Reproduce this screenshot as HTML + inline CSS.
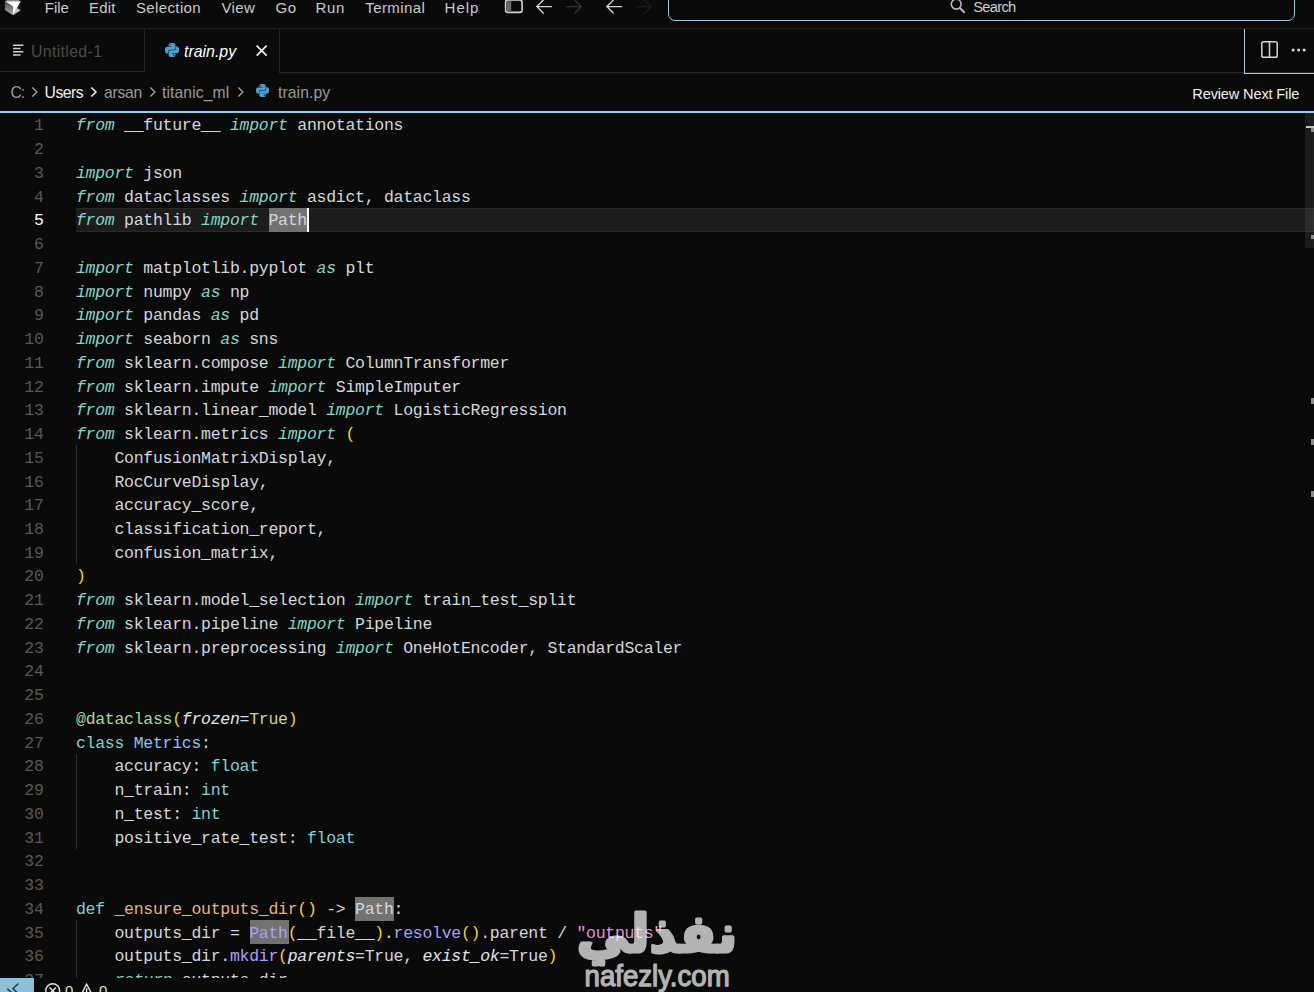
<!DOCTYPE html>
<html lang="en">
<head>
<meta charset="utf-8">
<title>train.py</title>
<style>
html,body{margin:0;padding:0;}
body{width:1314px;height:992px;overflow:hidden;background:#0a0a0a;position:relative;font-family:"Liberation Sans",sans-serif;color:#d6d6dd;}
#app{position:absolute;left:0;top:0;width:1314px;height:992px;overflow:hidden;background:#0a0a0a;}
svg{position:absolute;overflow:visible;}
/* title bar */
#title{position:absolute;left:0;top:0;width:1314px;height:28px;border-bottom:1px solid #212121;}
.mi{position:absolute;top:-3px;font-size:15px;line-height:22px;color:#cacaca;white-space:nowrap;}
#search{position:absolute;left:668px;top:-12px;width:624.6px;height:30.8px;border:1.2px solid #a4c9de;border-radius:7px;}
#search span{position:absolute;left:304.2px;top:7px;font-size:14.7px;line-height:22px;color:#cfcfcf;letter-spacing:-0.69px;}
/* tabs */
#tabs{position:absolute;left:0;top:29px;width:1314px;height:43px;}
.tab{position:absolute;top:0;height:42px;}
.tabtxt{position:absolute;top:12px;font-size:15.9px;line-height:22px;white-space:nowrap;}
/* breadcrumbs */
#crumbs{position:absolute;left:0;top:73px;width:1314px;height:38px;}
.bc{position:absolute;top:9px;font-size:15.7px;line-height:22px;color:#9a9a9a;white-space:nowrap;}
#blueline{position:absolute;left:0;top:111px;width:1314px;height:2px;background:#9fcbe6;box-shadow:0 0 0 1px #06101c;}
/* editor */
#editor{position:absolute;left:0;top:113px;width:1314px;height:864.5px;overflow:hidden;}
#ed{position:absolute;left:0;top:-113px;width:1314px;height:992px;}
.ln,.cl{position:absolute;font-family:"Liberation Mono",monospace;font-size:16.5px;line-height:23.74px;height:23.74px;white-space:pre;letter-spacing:-0.28px;}
.ln{left:0;width:43.6px;text-align:right;color:#585858;}
.ln.cur{color:#ffffff;}
.cl{left:76px;color:#d6d6dd;}
.k{color:#83d6c5;font-style:italic;}
.d{color:#d6d6dd;}
.t{color:#82d2ce;}
.c{color:#87c3ff;}
.f{color:#efb080;}
.m{color:#aaa0fa;}
.s{color:#e394dc;}
.y{color:#fbd02c;}
.g{color:#a8cc7c;}
.p{color:#e4e4ea;font-style:italic;}
.b{color:#cbd4a3;}
.dc{color:#b3d499;}
.hl{position:absolute;background:#727272;height:24px;}
#curline{position:absolute;left:76px;top:208px;width:1238px;height:22px;background:#1d1d1e;border-top:1px solid #2a2a2b;border-bottom:1px solid #2a2a2b;}
#caret{position:absolute;left:307px;top:208px;width:2px;height:24px;background:#ffffff;}
.guide{position:absolute;left:76px;width:1px;background:#303030;}
#sb{position:absolute;left:1305px;top:113px;width:9px;height:135px;background:rgba(255,255,255,0.075);}
.mk{position:absolute;left:1311px;width:3px;height:6px;background:#8c8c8c;}
/* status */
#status{position:absolute;left:0;top:977.5px;width:1314px;height:15px;background:#0a0a0a;}
#remote{position:absolute;left:0;top:977.5px;width:34px;height:15px;background:#8cc0d6;}
.st{position:absolute;top:982px;font-size:15px;line-height:18px;color:#e0e0e0;}
</style>
</head>
<body>
<div id="app">
 <div id="title">
  <svg style="left:0;top:0" width="26" height="18" viewBox="0 0 26 18"><defs><linearGradient id="lg" x1="0" y1="0" x2="0" y2="1"><stop offset="0" stop-color="#474747"/><stop offset="1" stop-color="#b4b4b4"/></linearGradient></defs><polygon points="4.9,1.3 12.9,-3.3 20.7,1.3" fill="#8a8a8a"/><polygon points="4.9,1.3 12.9,6.2 13.1,15.2 4.9,10" fill="url(#lg)"/><polygon points="20.7,1.3 20.7,10.2 17,8.1" fill="#1c1c1c"/><polygon points="17,8.1 20.7,10.2 13.1,15.2" fill="#c6c6c6"/><polygon points="4.9,1.3 20.7,1.3 13.1,15.2 12.9,6.2" fill="#ffffff"/></svg>
  <div class="mi" style="left:44.8px;letter-spacing:-0.08px">File</div>
  <div class="mi" style="left:89px;letter-spacing:0.2px">Edit</div>
  <div class="mi" style="left:136px;letter-spacing:0.37px">Selection</div>
  <div class="mi" style="left:221.4px;letter-spacing:0.4px">View</div>
  <div class="mi" style="left:275.6px;letter-spacing:0.43px">Go</div>
  <div class="mi" style="left:315.6px;letter-spacing:0.66px">Run</div>
  <div class="mi" style="left:365.2px;letter-spacing:0.44px">Terminal</div>
  <div class="mi" style="left:444.6px;letter-spacing:1.0px">Help</div>
  <svg style="left:504px;top:-2px" width="20" height="17" viewBox="0 0 20 17"><rect x="1.6" y="1.9" width="16.5" height="12.5" rx="2.4" fill="none" stroke="#d4d4d4" stroke-width="1.6"/><rect x="2.9" y="3.2" width="4.3" height="9.9" fill="#6a6a6a"/></svg>
  <svg style="left:536px;top:0" width="16" height="14" viewBox="0 0 16 14"><path d="M15.9 6.6H1M7.7 -0.2L0.9 6.6l6.8 6.8" fill="none" stroke="#d2d2d2" stroke-width="1.4"/></svg>
  <svg style="left:566px;top:0" width="16" height="14" viewBox="0 0 16 14"><path d="M0.1 6.6h14.9M8.3 -0.2L15.1 6.6l-6.8 6.8" fill="none" stroke="#333333" stroke-width="1.4"/></svg>
  <svg style="left:606px;top:0" width="16" height="14" viewBox="0 0 16 14"><path d="M15.9 6.6H1M7.7 -0.2L0.9 6.6l6.8 6.8" fill="none" stroke="#d2d2d2" stroke-width="1.4"/></svg>
  <svg style="left:636px;top:0" width="16" height="14" viewBox="0 0 16 14"><path d="M0.1 6.6h14.9M8.3 -0.2L15.1 6.6l-6.8 6.8" fill="none" stroke="#1d1d1d" stroke-width="1.4"/></svg>
  <div id="search">
   <svg style="left:281px;top:9.4px" width="16" height="16" viewBox="0 0 16 16"><circle cx="6.2" cy="6.2" r="4.9" fill="none" stroke="#bcbcbc" stroke-width="1.6"/><path d="M9.8 9.9l4.3 4.3" stroke="#bcbcbc" stroke-width="2" stroke-linecap="round"/></svg>
   <span>Search</span>
  </div>
 </div>
 <div id="tabs">
  <div style="position:absolute;left:0;top:42.4px;width:145px;height:1px;background:#272727"></div>
  <div style="position:absolute;left:279px;top:42.5px;width:1035px;height:1.2px;background:#2a2a2a"></div>
  <div class="tab" style="left:0;width:144px;border-right:1px solid #252525;">
   <svg style="left:12.5px;top:15px" width="11" height="13" viewBox="0 0 11 13"><path d="M0 1.2h10.3M0 4.5h7.6M0 7.8h10.3M0 11.1h7.6" stroke="#cdcdcd" stroke-width="1.5"/></svg>
   <div class="tabtxt" style="left:31px;color:#4b4b4b;letter-spacing:0.33px">Untitled-1</div>
  </div>
  <div class="tab" style="left:145px;width:134px;height:43px;border-right:1px solid #252525;">
   <svg style="left:19.7px;top:13.7px" width="14" height="14" viewBox="0 0 24 24"><path fill="#4d9fd0" d="M14.25.18l.9.2.73.26.59.3.45.32.34.34.25.34.16.33.1.3.04.26.02.2-.01.13V8.5l-.05.63-.13.55-.21.46-.26.38-.3.31-.33.25-.35.19-.35.14-.33.1-.3.07-.26.04-.21.02H8.77l-.69.05-.59.14-.5.22-.41.27-.33.32-.27.35-.2.36-.15.37-.1.35-.07.32-.04.27-.02.21v3.06H3.17l-.21-.03-.28-.07-.32-.12-.35-.18-.36-.26-.36-.36-.35-.46-.32-.59-.28-.73-.21-.88-.14-1.05-.05-1.23.06-1.22.16-1.04.24-.87.32-.71.36-.57.4-.44.42-.33.42-.24.4-.16.36-.1.32-.05.24-.01h.16l.06.01h8.16v-.83H6.18l-.01-2.75-.02-.37.05-.34.11-.31.17-.28.25-.26.31-.23.38-.2.44-.18.51-.15.58-.12.64-.1.71-.06.77-.04.84-.02 1.27.05zm-6.3 1.98l-.23.33-.08.41.08.41.23.34.33.22.41.09.41-.09.33-.22.23-.34.08-.41-.08-.41-.23-.33-.33-.22-.41-.09-.41.09zm13.09 3.95l.28.06.32.12.35.18.36.27.36.35.35.47.32.59.28.73.21.88.14 1.04.05 1.23-.06 1.23-.16 1.04-.24.86-.32.71-.36.57-.4.45-.42.33-.42.24-.4.16-.36.09-.32.05-.24.02-.16-.01h-8.22v.82h5.84l.01 2.76.02.36-.05.34-.11.31-.17.29-.25.25-.31.24-.38.2-.44.17-.51.15-.58.13-.64.09-.71.07-.77.04-.84.01-1.27-.04-1.07-.14-.9-.2-.73-.25-.59-.3-.45-.33-.34-.34-.25-.34-.16-.33-.1-.3-.04-.25-.02-.2.01-.13v-5.34l.05-.64.13-.54.21-.46.26-.38.3-.32.33-.24.35-.2.35-.14.33-.1.3-.06.26-.04.21-.02.13-.01h5.84l.69-.05.59-.14.5-.21.41-.28.33-.32.27-.35.2-.36.15-.36.1-.35.07-.32.04-.28.02-.21V6.07h2.09l.14.01zm-6.47 14.25l-.23.33-.08.41.08.41.23.33.33.23.41.08.41-.08.33-.23.23-.33.08-.41-.08-.41-.23-.33-.33-.23-.41-.08-.41.08z"/></svg>
   <div class="tabtxt" style="left:39px;color:#ffffff;font-style:italic">train.py</div>
   <svg style="left:110.6px;top:16.2px" width="11.3" height="11.3" viewBox="0 0 12 12"><path d="M0.7 0.7l10.6 10.6M11.3 0.7L0.7 11.3" stroke="#f6f6f6" stroke-width="1.7"/></svg>
  </div>
  <div style="position:absolute;left:1244px;top:0;width:70px;height:44.8px;border-left:1.2px solid #a2cce2;border-bottom:1.3px solid #a2cce2;box-sizing:border-box"></div>
  <svg style="left:1260.5px;top:12px" width="17" height="17" viewBox="0 0 17 17"><rect x="0.8" y="0.8" width="15.4" height="15.4" rx="1.8" fill="none" stroke="#d4d4d4" stroke-width="1.5"/><path d="M8.5 1v15" stroke="#d4d4d4" stroke-width="1.5"/></svg>
  <svg style="left:1291px;top:19px" width="15" height="4" viewBox="0 0 15 4"><circle cx="2.1" cy="2.1" r="1.5" fill="#dcdcdc"/><circle cx="7.6" cy="2.1" r="1.5" fill="#dcdcdc"/><circle cx="13.1" cy="2.1" r="1.5" fill="#dcdcdc"/></svg>
 </div>
 <div id="crumbs">
  <div class="bc" style="left:10.5px;letter-spacing:-1.2px">C:</div>
  <svg style="left:31px;top:13px" width="8" height="12" viewBox="0 0 8 12"><path d="M1.3 1.5l4.6 4.5-4.6 4.5" fill="none" stroke="#9a9a9a" stroke-width="1.5"/></svg>
  <div class="bc" style="left:44.6px;color:#efefef;letter-spacing:-0.5px">Users</div>
  <svg style="left:89.9px;top:13px" width="8" height="12" viewBox="0 0 8 12"><path d="M1.3 1.5l4.6 4.5-4.6 4.5" fill="none" stroke="#e8e8e8" stroke-width="1.7"/></svg>
  <div class="bc" style="left:104px;letter-spacing:-0.24px">arsan</div>
  <svg style="left:148.8px;top:13px" width="8" height="12" viewBox="0 0 8 12"><path d="M1.3 1.5l4.6 4.5-4.6 4.5" fill="none" stroke="#9a9a9a" stroke-width="1.5"/></svg>
  <div class="bc" style="left:162px;letter-spacing:0.1px">titanic_ml</div>
  <svg style="left:237.4px;top:13px" width="8" height="12" viewBox="0 0 8 12"><path d="M1.3 1.5l4.6 4.5-4.6 4.5" fill="none" stroke="#9a9a9a" stroke-width="1.5"/></svg>
  <svg style="left:256px;top:11.2px" width="13" height="13" viewBox="0 0 24 24"><path fill="#4d9fd0" d="M14.25.18l.9.2.73.26.59.3.45.32.34.34.25.34.16.33.1.3.04.26.02.2-.01.13V8.5l-.05.63-.13.55-.21.46-.26.38-.3.31-.33.25-.35.19-.35.14-.33.1-.3.07-.26.04-.21.02H8.77l-.69.05-.59.14-.5.22-.41.27-.33.32-.27.35-.2.36-.15.37-.1.35-.07.32-.04.27-.02.21v3.06H3.17l-.21-.03-.28-.07-.32-.12-.35-.18-.36-.26-.36-.36-.35-.46-.32-.59-.28-.73-.21-.88-.14-1.05-.05-1.23.06-1.22.16-1.04.24-.87.32-.71.36-.57.4-.44.42-.33.42-.24.4-.16.36-.1.32-.05.24-.01h.16l.06.01h8.16v-.83H6.18l-.01-2.75-.02-.37.05-.34.11-.31.17-.28.25-.26.31-.23.38-.2.44-.18.51-.15.58-.12.64-.1.71-.06.77-.04.84-.02 1.27.05zm-6.3 1.98l-.23.33-.08.41.08.41.23.34.33.22.41.09.41-.09.33-.22.23-.34.08-.41-.08-.41-.23-.33-.33-.22-.41-.09-.41.09zm13.09 3.95l.28.06.32.12.35.18.36.27.36.35.35.47.32.59.28.73.21.88.14 1.04.05 1.23-.06 1.23-.16 1.04-.24.86-.32.71-.36.57-.4.45-.42.33-.42.24-.4.16-.36.09-.32.05-.24.02-.16-.01h-8.22v.82h5.84l.01 2.76.02.36-.05.34-.11.31-.17.29-.25.25-.31.24-.38.2-.44.17-.51.15-.58.13-.64.09-.71.07-.77.04-.84.01-1.27-.04-1.07-.14-.9-.2-.73-.25-.59-.3-.45-.33-.34-.34-.25-.34-.16-.33-.1-.3-.04-.25-.02-.2.01-.13v-5.34l.05-.64.13-.54.21-.46.26-.38.3-.32.33-.24.35-.2.35-.14.33-.1.3-.06.26-.04.21-.02.13-.01h5.84l.69-.05.59-.14.5-.21.41-.28.33-.32.27-.35.2-.36.15-.36.1-.35.07-.32.04-.28.02-.21V6.07h2.09l.14.01zm-6.47 14.25l-.23.33-.08.41.08.41.23.33.33.23.41.08.41-.08.33-.23.23-.33.08-.41-.08-.41-.23-.33-.33-.23-.41-.08-.41.08z"/></svg>
  <div class="bc" style="left:278px;letter-spacing:0.1px">train.py</div>
  <div class="bc" style="left:1192.3px;top:10px;font-size:14.6px;color:#f0f0f0;letter-spacing:-0.16px">Review Next File</div>
 </div>
 <div id="blueline"></div>
 <div id="editor"><div id="ed">
  <div id="curline"></div>
  <div class="hl" style="left:269px;top:208px;width:38px"></div>
  <div class="hl" style="left:355px;top:896.5px;width:39px"></div>
  <div class="hl" style="left:250px;top:920.2px;width:39px;height:23.7px"></div>
  <div class="guide" style="top:445.4px;height:118.7px"></div>
  <div class="guide" style="top:754px;height:95px"></div>
  <div class="guide" style="top:920.2px;height:60px"></div>
<div class="ln" style="top:114.40px">1</div>
<div class="cl" style="top:114.40px"><span class="k">from</span><span class="d"> __future__ </span><span class="k">import</span><span class="d"> annotations</span></div>
<div class="ln" style="top:138.14px">2</div>
<div class="ln" style="top:161.88px">3</div>
<div class="cl" style="top:161.88px"><span class="k">import</span><span class="d"> json</span></div>
<div class="ln" style="top:185.62px">4</div>
<div class="cl" style="top:185.62px"><span class="k">from</span><span class="d"> dataclasses </span><span class="k">import</span><span class="d"> asdict, dataclass</span></div>
<div class="ln cur" style="top:209.36px">5</div>
<div class="cl" style="top:209.36px"><span class="k">from</span><span class="d"> pathlib </span><span class="k">import</span><span class="d"> </span><span class="d">Path</span></div>
<div class="ln" style="top:233.10px">6</div>
<div class="ln" style="top:256.84px">7</div>
<div class="cl" style="top:256.84px"><span class="k">import</span><span class="d"> matplotlib.pyplot </span><span class="k">as</span><span class="d"> plt</span></div>
<div class="ln" style="top:280.58px">8</div>
<div class="cl" style="top:280.58px"><span class="k">import</span><span class="d"> numpy </span><span class="k">as</span><span class="d"> np</span></div>
<div class="ln" style="top:304.32px">9</div>
<div class="cl" style="top:304.32px"><span class="k">import</span><span class="d"> pandas </span><span class="k">as</span><span class="d"> pd</span></div>
<div class="ln" style="top:328.06px">10</div>
<div class="cl" style="top:328.06px"><span class="k">import</span><span class="d"> seaborn </span><span class="k">as</span><span class="d"> sns</span></div>
<div class="ln" style="top:351.80px">11</div>
<div class="cl" style="top:351.80px"><span class="k">from</span><span class="d"> sklearn.compose </span><span class="k">import</span><span class="d"> ColumnTransformer</span></div>
<div class="ln" style="top:375.54px">12</div>
<div class="cl" style="top:375.54px"><span class="k">from</span><span class="d"> sklearn.impute </span><span class="k">import</span><span class="d"> SimpleImputer</span></div>
<div class="ln" style="top:399.28px">13</div>
<div class="cl" style="top:399.28px"><span class="k">from</span><span class="d"> sklearn.linear_model </span><span class="k">import</span><span class="d"> LogisticRegression</span></div>
<div class="ln" style="top:423.02px">14</div>
<div class="cl" style="top:423.02px"><span class="k">from</span><span class="d"> sklearn.metrics </span><span class="k">import</span><span class="d"> </span><span class="y">(</span></div>
<div class="ln" style="top:446.76px">15</div>
<div class="cl" style="top:446.76px"><span class="d">    ConfusionMatrixDisplay,</span></div>
<div class="ln" style="top:470.50px">16</div>
<div class="cl" style="top:470.50px"><span class="d">    RocCurveDisplay,</span></div>
<div class="ln" style="top:494.24px">17</div>
<div class="cl" style="top:494.24px"><span class="d">    accuracy_score,</span></div>
<div class="ln" style="top:517.98px">18</div>
<div class="cl" style="top:517.98px"><span class="d">    classification_report,</span></div>
<div class="ln" style="top:541.72px">19</div>
<div class="cl" style="top:541.72px"><span class="d">    confusion_matrix,</span></div>
<div class="ln" style="top:565.46px">20</div>
<div class="cl" style="top:565.46px"><span class="y">)</span></div>
<div class="ln" style="top:589.20px">21</div>
<div class="cl" style="top:589.20px"><span class="k">from</span><span class="d"> sklearn.model_selection </span><span class="k">import</span><span class="d"> train_test_split</span></div>
<div class="ln" style="top:612.94px">22</div>
<div class="cl" style="top:612.94px"><span class="k">from</span><span class="d"> sklearn.pipeline </span><span class="k">import</span><span class="d"> Pipeline</span></div>
<div class="ln" style="top:636.68px">23</div>
<div class="cl" style="top:636.68px"><span class="k">from</span><span class="d"> sklearn.preprocessing </span><span class="k">import</span><span class="d"> OneHotEncoder, StandardScaler</span></div>
<div class="ln" style="top:660.42px">24</div>
<div class="ln" style="top:684.16px">25</div>
<div class="ln" style="top:707.90px">26</div>
<div class="cl" style="top:707.90px"><span class="g">@</span><span class="dc">dataclass</span><span class="y">(</span><span class="p">frozen</span><span class="d">=</span><span class="b">True</span><span class="y">)</span></div>
<div class="ln" style="top:731.64px">27</div>
<div class="cl" style="top:731.64px"><span class="t">class</span><span class="d"> </span><span class="c">Metrics</span><span class="d">:</span></div>
<div class="ln" style="top:755.38px">28</div>
<div class="cl" style="top:755.38px"><span class="d">    accuracy: </span><span class="t">float</span></div>
<div class="ln" style="top:779.12px">29</div>
<div class="cl" style="top:779.12px"><span class="d">    n_train: </span><span class="t">int</span></div>
<div class="ln" style="top:802.86px">30</div>
<div class="cl" style="top:802.86px"><span class="d">    n_test: </span><span class="t">int</span></div>
<div class="ln" style="top:826.60px">31</div>
<div class="cl" style="top:826.60px"><span class="d">    positive_rate_test: </span><span class="t">float</span></div>
<div class="ln" style="top:850.34px">32</div>
<div class="ln" style="top:874.08px">33</div>
<div class="ln" style="top:897.82px">34</div>
<div class="cl" style="top:897.82px"><span class="t">def</span><span class="d"> </span><span class="f">_ensure_outputs_dir</span><span class="y">()</span><span class="d"> -&gt; </span><span class="d">Path</span><span class="d">:</span></div>
<div class="ln" style="top:921.56px">35</div>
<div class="cl" style="top:921.56px"><span class="d">    outputs_dir = </span><span class="m">Path</span><span class="y">(</span><span class="d">__file__</span><span class="y">)</span><span class="d">.</span><span class="m">resolve</span><span class="y">()</span><span class="d">.parent / </span><span class="s">"outputs"</span></div>
<div class="ln" style="top:945.30px">36</div>
<div class="cl" style="top:945.30px"><span class="d">    outputs_dir.</span><span class="m">mkdir</span><span class="y">(</span><span class="p">parents</span><span class="d">=</span><span class="d">True</span><span class="d">, </span><span class="p">exist_ok</span><span class="d">=</span><span class="d">True</span><span class="y">)</span></div>
<div class="ln" style="top:969.04px">37</div>
<div class="cl" style="top:969.04px"><span class="d">    </span><span class="k">return</span><span class="d"> outputs_dir</span></div>
  <div id="caret"></div>
 </div></div>
 <div id="sb"></div>
 <div class="mk" style="left:1306px;width:8px;top:126px;height:2px;background:#c4c4c4"></div>
 <div class="mk" style="top:128px;height:4px"></div>
 <div class="mk" style="top:235px;height:4px"></div>
 <div class="mk" style="top:398px"></div>
 <div class="mk" style="top:439px"></div>
 <div class="mk" style="top:491px"></div>
 <div id="status"></div>
 <div id="remote">
  <svg style="left:0;top:0" width="34" height="15" viewBox="0 0 34 15"><path d="M18.4 5.6L12.9 10.7l5.5 5M7.2 10.7l5.6 5" fill="none" stroke="#173848" stroke-width="1.4"/></svg>
 </div>
 <svg style="left:45px;top:982.5px" width="16" height="16" viewBox="0 0 16 16"><circle cx="7.7" cy="7.7" r="6.9" fill="none" stroke="#e6e6e6" stroke-width="1.4"/><path d="M4.6 4.6l6.2 6.2M10.8 4.6l-6.2 6.2" stroke="#e6e6e6" stroke-width="1.4"/></svg>
 <div class="st" style="left:65px">0</div>
 <svg style="left:80px;top:982.5px" width="14" height="14" viewBox="0 0 14 14"><path d="M6.6 1L0.8 12.5h11.6z" fill="none" stroke="#e6e6e6" stroke-width="1.4" stroke-linejoin="round"/><path d="M6.6 5v4" stroke="#e6e6e6" stroke-width="1.4"/></svg>
 <div class="st" style="left:99px">0</div>
 <svg id="wm" style="left:570px;top:900px" width="180" height="92" viewBox="0 0 180 92">
  <g fill="#ffffff" stroke="#ffffff" stroke-linejoin="round" stroke-linecap="round" opacity="0.69">
   <text x="87" y="51.5" text-anchor="middle" font-family="'DejaVu Sans',sans-serif" font-weight="bold" font-size="52.5" stroke-width="3.2">نفذلي</text>
   <text x="14.6" y="85.9" font-family="'Liberation Sans',sans-serif" font-size="29.5" stroke-width="1.25" textLength="145" lengthAdjust="spacingAndGlyphs">nafezly.com</text>
  </g>
 </svg>
</div>
</body>
</html>
